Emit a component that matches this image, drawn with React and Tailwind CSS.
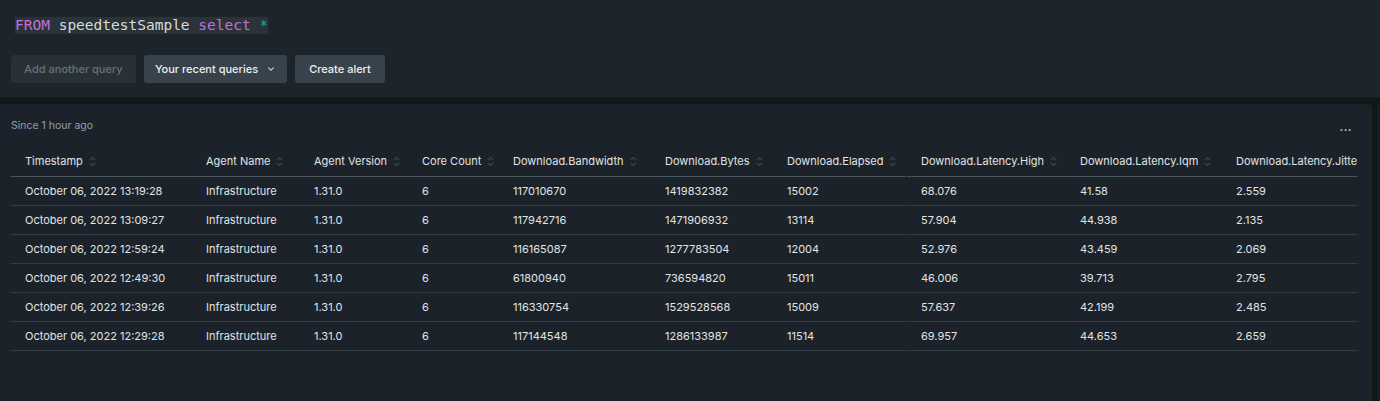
import { ChevronDown } from "lucide-react";

const leftCols = ["Timestamp", "Agent Name", "Agent Version", "Core Count", "Download.Bandwidth", "Download.Bytes", "Download.Elapsed"];
const rightCols = ["Download.Latency.High", "Download.Latency.Iqm", "Download.Latency.Jitter"];

const rows = [
  ["October 06, 2022 13:19:28", "Infrastructure", "1.31.0", "6", "117010670", "1419832382", "15002", "68.076", "41.58", "2.559"],
  ["October 06, 2022 13:09:27", "Infrastructure", "1.31.0", "6", "117942716", "1471906932", "13114", "57.904", "44.938", "2.135"],
  ["October 06, 2022 12:59:24", "Infrastructure", "1.31.0", "6", "116165087", "1277783504", "12004", "52.976", "43.459", "2.069"],
  ["October 06, 2022 12:49:30", "Infrastructure", "1.31.0", "6", "61800940", "736594820", "15011", "46.006", "39.713", "2.795"],
  ["October 06, 2022 12:39:26", "Infrastructure", "1.31.0", "6", "116330754", "1529528568", "15009", "57.637", "42.199", "2.485"],
  ["October 06, 2022 12:29:28", "Infrastructure", "1.31.0", "6", "117144548", "1286133987", "11514", "69.957", "44.653", "2.659"],
];

const SortIcon = () => (
  <svg width="7" height="11" viewBox="0 0 7 11" className="ml-[6px] shrink-0" fill="none" stroke="#3b464d" strokeWidth="1.2">
    <path d="M1 4l2.5-2.5L6 4" />
    <path d="M1 7l2.5 2.5L6 7" />
  </svg>
);

const Header = ({ label, last }) => (
  <div className="h-[30px] flex items-center pl-[14px] whitespace-nowrap overflow-hidden">
    <span>{label}</span>
    {!last && <SortIcon />}
  </div>
);

export default function App() {
  return (
    <div className="w-[1380px] h-[401px] bg-[#111818] overflow-hidden text-[11px] text-[#e1e4e5]" style={{ fontFamily: "Inter, 'Liberation Sans', sans-serif" }}>
      <div className="h-[97px] bg-[#1d252c] pt-[17px] pl-[15px]">
        <div className="inline-flex bg-[#2a3338] h-[17px] items-center text-[14.5px] leading-none" style={{ fontFamily: "'DejaVu Sans Mono', monospace" }}>
          <span className="text-[#c46fd7]">FROM</span>
          <span className="text-[#d8dcdd]">&nbsp;speedtestSample&nbsp;</span>
          <span className="text-[#c46fd7]">select</span>
          <span className="text-[#1ea8b2]">&nbsp;*</span>
        </div>
        <div className="flex gap-[8px] mt-[20px] -ml-[4px]">
          <button className="h-[28px] w-[125px] rounded-[3px] bg-[#283136] text-[#687176] font-medium">Add another query</button>
          <button className="h-[28px] w-[143px] rounded-[3px] bg-[#37424a] text-[#eef0f1] font-medium flex items-center justify-center gap-[8px]">
            Your recent queries <ChevronDown size={10} strokeWidth={2.5} />
          </button>
          <button className="h-[28px] w-[90px] rounded-[3px] bg-[#37424a] text-[#eef0f1] font-medium">Create alert</button>
        </div>
      </div>
      <div className="flex mt-[7px]">
        <div className="w-[1372px] h-[297px] bg-[#1b2229] rounded-tr-[4px] pl-[11px] relative">
          <div className="h-[42px] flex items-center text-[10.5px] text-[#8ea0b0] pt-[1px]">Since 1 hour ago</div>
          <span className="absolute right-[20px] top-[15px] text-[#d0d4d6] font-bold text-[11px] tracking-[0.5px]">...</span>
          <div className="flex w-[1346px] overflow-hidden">
            <div className="shrink-0">
              <div className="grid grid-cols-[181px_108px_108px_91px_152px_122px_133px] border-b border-[#4a555c]">
                {leftCols.map((c) => (
                  <Header key={c} label={c} />
                ))}
              </div>
              {rows.map((r, i) => (
                <div key={i} className="grid grid-cols-[181px_108px_108px_91px_152px_122px_133px] h-[29px] items-center border-b border-[#333d44]">
                  {r.slice(0, 7).map((v, j) => (
                    <div key={j} className="pl-[14px] whitespace-nowrap">{v}</div>
                  ))}
                </div>
              ))}
            </div>
            <div className="ml-[1px] flex-1 overflow-hidden">
              <div className="grid grid-cols-[159px_156px_160px] border-b border-[#4a555c]">
                {rightCols.map((c, i) => (
                  <Header key={c} label={c} last={i === 2} />
                ))}
              </div>
              {rows.map((r, i) => (
                <div key={i} className="grid grid-cols-[159px_156px_160px] h-[29px] items-center border-b border-[#333d44]">
                  {r.slice(7).map((v, j) => (
                    <div key={j} className="pl-[14px] whitespace-nowrap">{v}</div>
                  ))}
                </div>
              ))}
            </div>
          </div>
        </div>
        <div className="w-[6px]" />
        <div className="w-[1px] h-[297px] bg-[#1f272d]" />
      </div>
    </div>
  );
}
